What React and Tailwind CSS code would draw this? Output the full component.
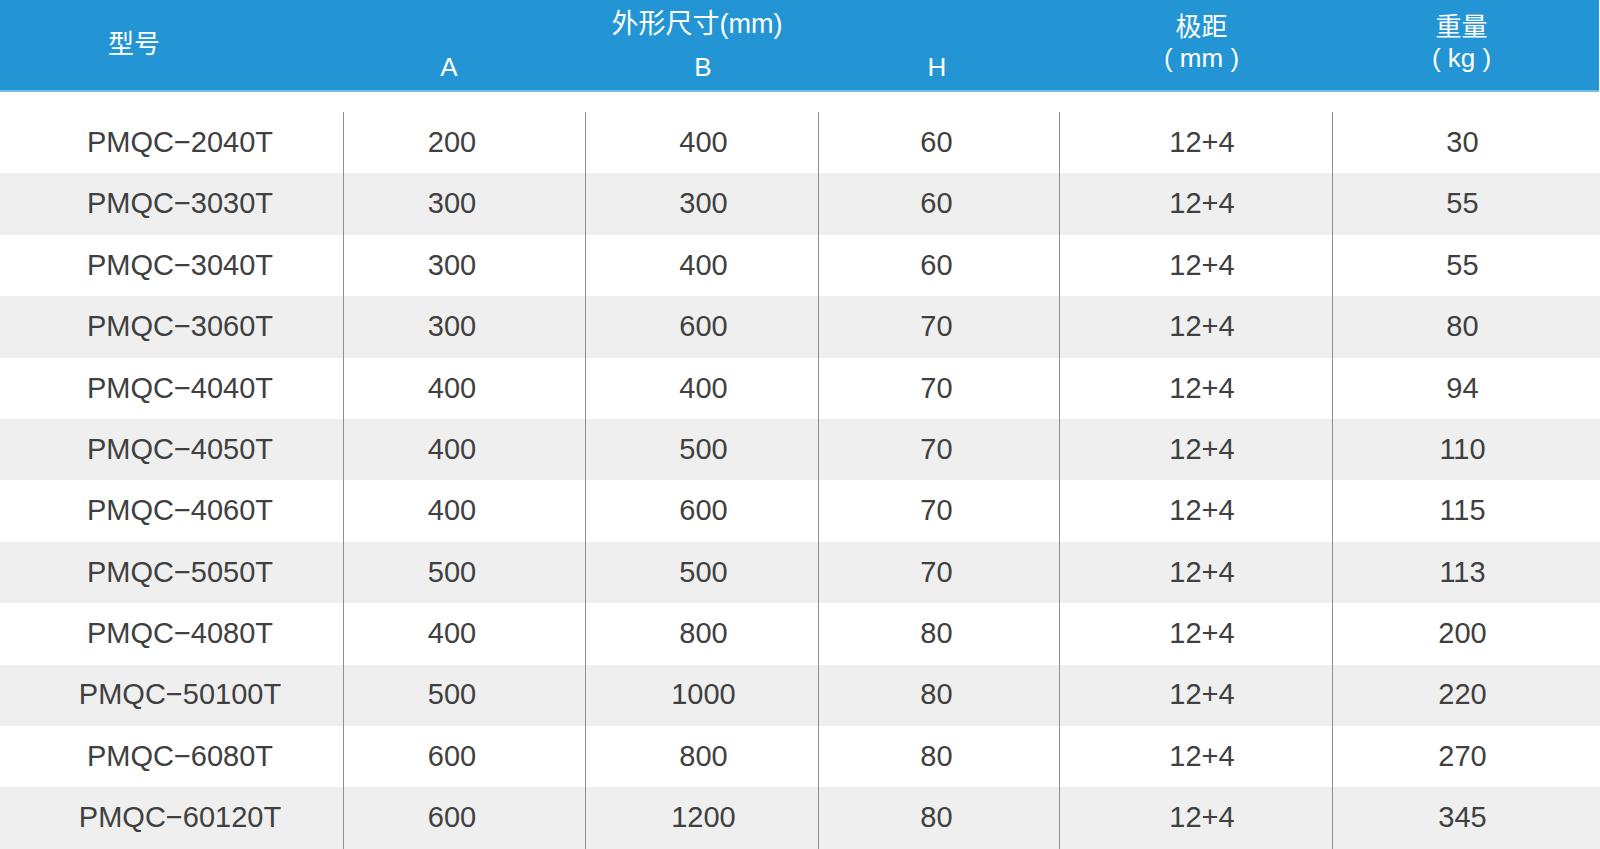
import React from "react";

const rows = [
  ["PMQC−2040T", "200", "400", "60", "12+4", "30"],
  ["PMQC−3030T", "300", "300", "60", "12+4", "55"],
  ["PMQC−3040T", "300", "400", "60", "12+4", "55"],
  ["PMQC−3060T", "300", "600", "70", "12+4", "80"],
  ["PMQC−4040T", "400", "400", "70", "12+4", "94"],
  ["PMQC−4050T", "400", "500", "70", "12+4", "110"],
  ["PMQC−4060T", "400", "600", "70", "12+4", "115"],
  ["PMQC−5050T", "500", "500", "70", "12+4", "113"],
  ["PMQC−4080T", "400", "800", "80", "12+4", "200"],
  ["PMQC−50100T", "500", "1000", "80", "12+4", "220"],
  ["PMQC−6080T", "600", "800", "80", "12+4", "270"],
  ["PMQC−60120T", "600", "1200", "80", "12+4", "345"],
];

const cols = "grid grid-cols-[343px_242px_233px_241px_273px_1fr]";

export default function App() {
  return (
    <div
      className="w-[1600px] h-[849px] bg-white overflow-hidden"
      style={{ fontFamily: '"Liberation Sans", "Noto Sans CJK SC", Arial, sans-serif' }}
    >
      {/* header */}
      <div className={`${cols} grid-rows-[44px_46px] h-[92px] bg-[#2395d5] border-b-2 border-[#74bbe6] text-white text-[26px] mr-[1px]`}>
        <div className="row-span-2 flex items-center justify-center pr-[75px] pb-[2px]">型号</div>
        <div className="col-span-3 flex items-end justify-center pr-[8px] leading-none pb-[6px] text-[27px]">外形尺寸(mm)</div>
        <div className="row-span-2 flex flex-col items-center justify-center pl-[12px] leading-[31px] pb-[4px]">
          <span>极距</span>
          <span className="whitespace-pre">( mm )</span>
        </div>
        <div className="row-span-2 flex flex-col items-center justify-center pr-[8px] leading-[31px] pb-[4px]">
          <span>重量</span>
          <span className="whitespace-pre">( kg )</span>
        </div>
        <div className="col-start-2 row-start-2 flex items-center justify-center pr-[30px]">A</div>
        <div className="col-start-3 row-start-2 flex items-center justify-center pl-[3px]">B</div>
        <div className="col-start-4 row-start-2 flex items-center justify-center pr-[3px]">H</div>
      </div>

      {/* body */}
      <div className="pt-[20px] text-[29px] text-[#404040]">
        {rows.map((r, i) => (
          <div
            key={i}
            className={`${cols} h-[61.4px] ${i % 2 === 1 ? "bg-[#efefef]" : "bg-white"}`}
          >
            <div className="flex items-center justify-center pl-[17px]">{r[0]}</div>
            <div className="flex items-center justify-center pr-[25px] border-l border-[#8e8e8e]">{r[1]}</div>
            <div className="flex items-center justify-center pl-[3px] border-l border-[#8e8e8e]">{r[2]}</div>
            <div className="flex items-center justify-center pr-[5px] border-l border-[#8e8e8e]">{r[3]}</div>
            <div className="flex items-center justify-center pl-[12px] border-l border-[#8e8e8e]">{r[4]}</div>
            <div className="flex items-center justify-center pr-[8px] border-l border-[#8e8e8e]">{r[5]}</div>
          </div>
        ))}
      </div>
    </div>
  );
}
